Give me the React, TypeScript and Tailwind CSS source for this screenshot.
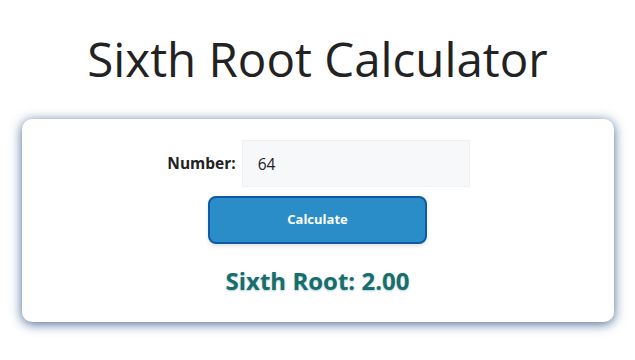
import React from "react";

export default function App() {
  return (
    <div
      className="w-[635px] h-[360px] bg-white flex flex-col items-center"
      style={{ fontFamily: '"Segoe UI", "Open Sans", "Noto Sans", sans-serif' }}
    >
      <h1 className="mt-[22px] text-[47.5px] leading-[74px] text-[#222] font-normal">
        Sixth Root Calculator
      </h1>
      <div className="mt-[23px] w-[592px] h-[203px] bg-white rounded-[10px] shadow-[0_2px_12px_rgba(40,80,130,0.85)] flex flex-col items-center pt-[21px]">
        <div className="flex items-center gap-[6px] translate-x-[1px]">
          <label className="font-bold text-[15.5px] text-[#222]">Number:</label>
          <input
            readOnly
            value="64"
            className="w-[228px] h-[47px] bg-[#f7f8fa] border border-[#eef0f2] px-[15px] text-[15.5px] text-[#222] outline-none"
          />
        </div>
        <button className="mt-[9px] w-[219px] h-[48px] bg-[#2a8dc7] border-2 border-[#0e5aa7] rounded-[8px] text-white font-bold text-[13px] shadow-[0_2px_4px_rgba(0,0,0,0.12)]">
          Calculate
        </button>
        <div className="mt-[21px] text-[24px] leading-[32px] font-bold text-[#176e6c] [text-shadow:0_1px_2px_rgba(0,80,120,0.3)]">
          Sixth Root: 2.00
        </div>
      </div>
    </div>
  );
}
